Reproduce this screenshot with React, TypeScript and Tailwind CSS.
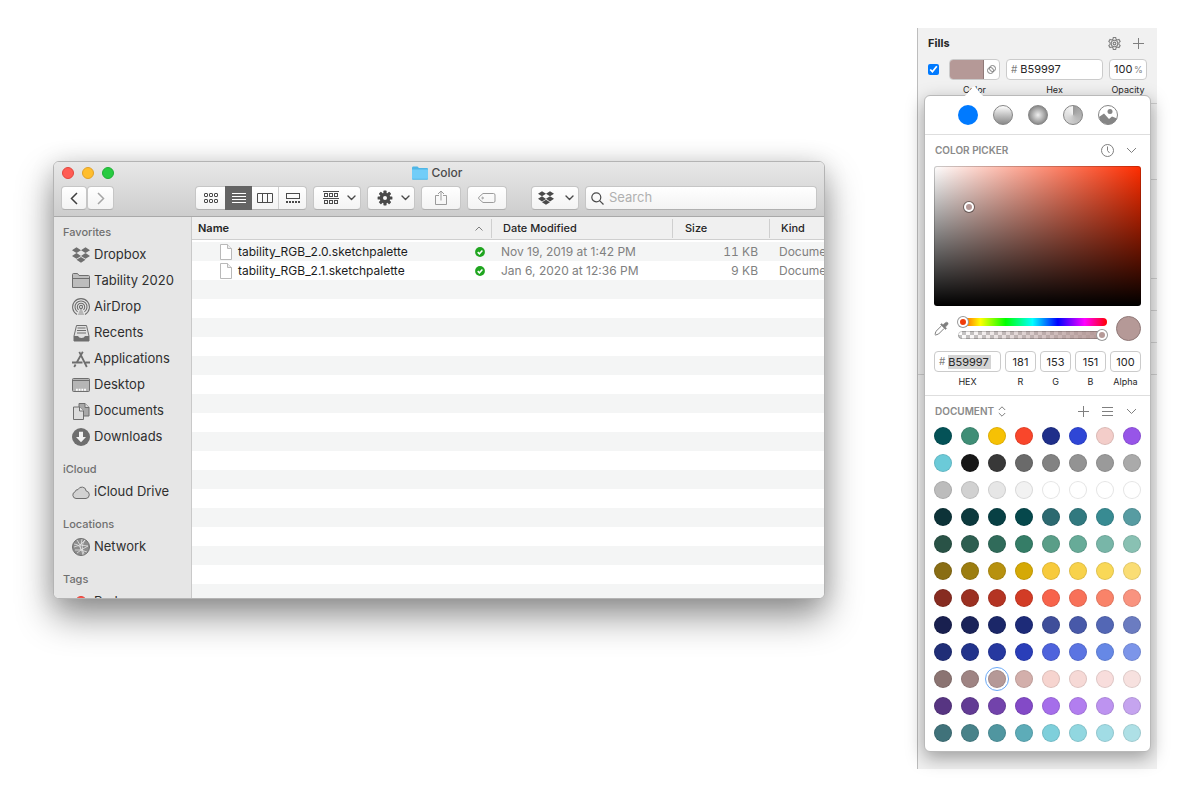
import React from 'react';
import { FaDropbox } from 'react-icons/fa';

type IconProps = { className?: string };

const GridIcon: React.FC = () => (
  <svg width="14" height="12" viewBox="0 0 14 12" fill="none" stroke="#4a4a4a">
    {[0.5, 5.5, 10.5].map((x) => (
      <g key={x}>
        <rect x={x} y="1.5" width="3" height="3" rx="0.5" />
        <rect x={x} y="7.5" width="3" height="3" rx="0.5" />
      </g>
    ))}
  </svg>
);

const ListIcon: React.FC = () => (
  <svg width="14" height="12" viewBox="0 0 14 12" stroke="#fff">
    <path d="M0 1.5h14M0 4.5h14M0 7.5h14M0 10.5h14" />
  </svg>
);

const ColumnsIcon: React.FC = () => (
  <svg width="16" height="12" viewBox="0 0 16 12" fill="none" stroke="#4a4a4a">
    <path d="M.5 1.5h15v9H.5zM5.5 1.5v9M10.5 1.5v9" />
  </svg>
);

const GalleryIcon: React.FC = () => (
  <svg width="14" height="12" viewBox="0 0 14 12" fill="none" stroke="#4a4a4a">
    <rect x=".5" y="1.5" width="13" height="5" />
    <path d="M0 10h14" strokeWidth="2" strokeDasharray="2 1" />
  </svg>
);

const GroupIcon: React.FC = () => (
  <svg width="16" height="14" viewBox="0 0 16 14" fill="none" stroke="#4a4a4a">
    <path d="M0 .5h16M0 7.5h16" />
    {[1.5, 6.5, 11.5].map((x) => (
      <g key={x}>
        <rect x={x} y="2.5" width="3" height="3" />
        <rect x={x} y="9.5" width="3" height="3" />
      </g>
    ))}
  </svg>
);

const CogIcon: React.FC = () => (
  <svg width="16" height="16" viewBox="-8 -8 16 16">
    {[0, 45, 90, 135].map((a) => (
      <rect key={a} x="-1.6" y="-7.4" width="3.2" height="14.8" rx=".6" fill="#4a4a4a" transform={`rotate(${a})`} />
    ))}
    <circle r="5.3" fill="#4a4a4a" />
    <circle r="2" fill="#fafafa" />
  </svg>
);

const ShareIcon: React.FC = () => (
  <svg width="12" height="16" viewBox="0 0 12 16" fill="none" stroke="#9b9b9b">
    <path d="M4 5.500H.5v9h11v-9H8M6 10.500V1M3 4l3-3 3 3" />
  </svg>
);

const TagIcon: React.FC = () => (
  <svg width="18" height="12" viewBox="0 0 18 12" fill="none" stroke="#9b9b9b">
    <path d="M5 1.500h10.500a1.500 1.500 0 0 1 1.500 1.500v6a1.500 1.500 0 0 1-1.500 1.500H5L1.200 7.200a1.600 1.600 0 0 1 0-2.400z" />
    <circle cx="4.600" cy="6" r=".8" />
  </svg>
);

const ChevronDown: React.FC<IconProps> = ({ className }) => (
  <svg className={className} width="9" height="6" viewBox="0 0 9 6" fill="none" stroke="currentColor" strokeWidth="1.4">
    <path d="M1 1l3.500 3.500L8 1" strokeLinecap="round" strokeLinejoin="round" />
  </svg>
);

const WideChevron: React.FC = () => (
  <svg width="11" height="7" viewBox="0 0 11 7" fill="none" stroke="#7f7f7f">
    <path d="M1 1l4.500 4.500L10 1" />
  </svg>
);

const PageIcon: React.FC = () => (
  <svg width="12" height="16" viewBox="0 0 12 16" fill="#fff" stroke="#b9b9b9">
    <path d="M.5.5h7L11.500 4.500v11H.5z" />
    <path d="M7.500.5v4h4" fill="#eee" />
  </svg>
);

const SyncedIcon: React.FC = () => (
  <svg width="10" height="10" viewBox="0 0 10 10">
    <circle cx="5" cy="5" r="4.900" fill="#1fa51f" />
    <path d="M2.700 5.100l1.700 1.700 3-3.300" fill="none" stroke="#fff" strokeWidth="1.500" />
  </svg>
);

const FolderIcon: React.FC = () => (
  <svg width="18" height="16" viewBox="0 0 18 16" fill="#bdbdbd" stroke="#6e6e6e">
    <path d="M.5 14.500v-13q0-1 1-1h4l1.500 2h9.500q1 0 1 1v11z" />
    <path d="M.5 5.500h17" />
  </svg>
);

const AirDropIcon: React.FC = () => (
  <svg width="18" height="18" viewBox="0 0 18 18" fill="none" stroke="#6e6e6e" strokeWidth="1.100">
    <path d="M5 16.400a8.400 8.400 0 1 1 8 0" />
    <path d="M5.600 13.900a6 6 0 1 1 6.800 0" />
    <path d="M6.600 11.800a3.700 3.700 0 1 1 4.800 0" />
    <circle cx="9" cy="9" r="1.600" />
    <path d="M9 9l3.200 8H5.800z" fill="#6e6e6e" stroke="none" opacity=".4" />
  </svg>
);

const RecentsIcon: React.FC = () => (
  <svg width="17" height="17" viewBox="0 0 17 17">
    <path d="M3.500.5h10l2.500 10.500v5H1V11z" fill="#e0e0e0" stroke="#6e6e6e" />
    <path d="M1 11h4q.8 2 3.500 2T12 11h4v5H1z" fill="#6e6e6e" />
    <path d="M4.500 3h8M4 5.500h9M4 8h9" stroke="#6e6e6e" strokeWidth="1.200" />
  </svg>
);

const AppsIcon: React.FC = () => (
  <svg width="18" height="17" viewBox="0 0 18 17" fill="none" stroke="#6e6e6e" strokeWidth="1.800">
    <path d="M7.300.8L14.800 16M10.800.8L4.700 11.500M0 11.500h10.500M13.500 11.500H18M3.600 13.500L2.200 16" />
  </svg>
);

const DesktopIcon: React.FC = () => (
  <svg width="18" height="14" viewBox="0 0 18 14">
    <rect x=".5" y=".5" width="17" height="13" rx="1" fill="#b5b5b5" stroke="#6e6e6e" />
    <path d="M1 2.500h16" stroke="#6e6e6e" />
    <path d="M4 11.800h10" stroke="#fff" strokeWidth="2" strokeDasharray="1.800 .9" />
  </svg>
);

const DocumentsIcon: React.FC = () => (
  <svg width="17" height="17" viewBox="0 0 17 17" stroke="#6e6e6e">
    <path d="M6 .5h6l4 4v8.500H6z" fill="#a8a8a8" />
    <path d="M12 .5v4h4" fill="#ddd" />
    <path d="M.5 4h6l4 4v8.500H.5z" fill="#dcdcdc" />
    <path d="M6.500 4v4h4" fill="#eee" />
  </svg>
);

const DownloadsIcon: React.FC = () => (
  <svg width="18" height="18" viewBox="0 0 18 18">
    <circle cx="9" cy="9" r="9" fill="#6e6e6e" />
    <path d="M7 3.800h4V9h3l-5 5.300L4 9h3z" fill="#f2f2f2" />
  </svg>
);

const CloudIcon: React.FC = () => (
  <svg width="18" height="13" viewBox="0 0 18 13">
    <path
      d="M4 12.500a3.500 3.500 0 0 1-.8-6.800A2.600 2.600 0 0 1 6 3.600 4.300 4.300 0 0 1 14.200 5 3.800 3.800 0 0 1 14 12.500z"
      fill="#d2d2d2"
      stroke="#6e6e6e"
    />
  </svg>
);

const NetworkIcon: React.FC = () => (
  <svg width="18" height="18" viewBox="0 0 18 18">
    <circle cx="9" cy="9" r="8.500" fill="#8d8d8d" stroke="#6e6e6e" />
    <path
      d="M5 2l3 5-6 2M8 7l5-5M8 7l1 5-4 3M9 12l6 2M8 7l8 1M16 8l-7 4M3 12l6 0M10 1l-1 6M13 2q-5 6-1 14M2 6q7 0 9 11"
      fill="none"
      stroke="#e4e4e4"
      strokeWidth=".8"
    />
  </svg>
);

const RedTagIcon: React.FC = () => <span className="size-3 rounded-full border border-[#e2453c] bg-[#ff534a]" />;

const sidebarGroups = [
  {
    title: 'Favorites',
    items: [
      { label: 'Dropbox', icon: <FaDropbox size={18} color="#6e6e6e" /> },
      { label: 'Tability 2020', icon: <FolderIcon /> },
      { label: 'AirDrop', icon: <AirDropIcon /> },
      { label: 'Recents', icon: <RecentsIcon /> },
      { label: 'Applications', icon: <AppsIcon /> },
      { label: 'Desktop', icon: <DesktopIcon /> },
      { label: 'Documents', icon: <DocumentsIcon /> },
      { label: 'Downloads', icon: <DownloadsIcon /> },
    ],
  },
  { title: 'iCloud', items: [{ label: 'iCloud Drive', icon: <CloudIcon /> }] },
  { title: 'Locations', items: [{ label: 'Network', icon: <NetworkIcon /> }] },
  { title: 'Tags', items: [{ label: 'Red', icon: <RedTagIcon /> }] },
];

const files = [
  { name: 'tability_RGB_2.0.sketchpalette', date: 'Nov 19, 2019 at 1:42 PM', size: '11 KB', kind: 'Document' },
  { name: 'tability_RGB_2.1.sketchpalette', date: 'Jan 6, 2020 at 12:36 PM', size: '9 KB', kind: 'Document' },
];

const toolButton =
  'flex h-6 items-center rounded border border-[#c6c6c6] border-b-[#b0b0b0] bg-linear-to-b from-white to-[#f3f3f3] text-[#4a4a4a]';

const Finder: React.FC = () => (
  <section className="mt-[133px] flex h-[438px] min-w-0 flex-1 flex-col overflow-hidden rounded-md border border-[#b4b4b4] bg-white shadow-[0_18px_36px_rgba(0,0,0,0.42),0_2px_24px_rgba(0,0,0,0.12)]">
    {/* Title bar and toolbar */}
    <header className="h-[55px] shrink-0 border-b border-[#a9a9a9] bg-linear-to-b from-[#e8e8e8] to-[#cdcdcd] px-[7px]">
      <div className="mb-0.5 grid h-[22px] grid-cols-[1fr_auto_1fr] items-center">
        <div className="flex gap-2 pl-px">
          <button aria-label="Close" className="size-3 rounded-full border border-[#e2453c] bg-[#ff5c54]" />
          <button aria-label="Minimize" className="size-3 rounded-full border border-[#e0a028] bg-[#ffbe2e]" />
          <button aria-label="Zoom" className="size-3 rounded-full border border-[#1fae35] bg-[#28cb41]" />
        </div>
        <h1 className="flex items-center gap-1 pr-1 text-[12px] font-medium text-[#4a4a4a]">
          <svg width="16" height="14" viewBox="0 0 16 14">
            <path d="M0 2Q0 .5 1 .5h4.500L7 2h8q1 0 1 1v10q0 .8-1 .8H1q-1 0-1-.8z" fill="#4fb6e6" />
            <path d="M0 3.500h16v9.300H0z" fill="#72cdf8" />
          </svg>
          Color
        </h1>
      </div>
      <div className="flex">
        <div className="mr-[81px] flex">
          <button aria-label="Back" className={`${toolButton} w-[26px] justify-center`}>
            <svg width="8" height="13" viewBox="0 0 8 13" fill="none" stroke="#3f3f3f" strokeWidth="1.500">
              <path d="M7 1L1.500 6.500 7 12" />
            </svg>
          </button>
          <button aria-label="Forward" className={`${toolButton} w-[27px] justify-center`}>
            <svg width="8" height="13" viewBox="0 0 8 13" fill="none" stroke="#a5a5a5" strokeWidth="1.500">
              <path d="M1 1l5.500 5.500L1 12" />
            </svg>
          </button>
        </div>
        <div className="flex gap-1.5">
          <div className={`${toolButton} w-28`}>
            <button aria-label="Icons" className="flex w-[29px] justify-center"><GridIcon /></button>
            <button aria-label="List" className="-my-px flex h-6 w-[27px] items-center justify-center bg-[#646464]"><ListIcon /></button>
            <button aria-label="Columns" className="flex h-full w-[27px] items-center justify-center border-r border-[#cfcfcf]"><ColumnsIcon /></button>
            <button aria-label="Gallery" className="flex flex-1 justify-center"><GalleryIcon /></button>
          </div>
          <button aria-label="Group" className={`${toolButton} w-12 justify-between pr-1 pl-[9px]`}>
            <GroupIcon />
            <ChevronDown />
          </button>
          <button aria-label="Action" className={`${toolButton} w-12 justify-between pr-1 pl-[9px]`}>
            <CogIcon />
            <ChevronDown />
          </button>
          <button aria-label="Share" className={`${toolButton} w-10 justify-center`}><ShareIcon /></button>
          <button aria-label="Edit tags" className={`${toolButton} w-10 justify-center`}><TagIcon /></button>
        </div>
        <button aria-label="Dropbox" className={`${toolButton} ml-6 w-12 justify-between pr-1 pl-1.5`}>
          <FaDropbox size={16} />
          <ChevronDown />
        </button>
        <label className={`${toolButton} ml-1.5 min-w-0 flex-1 gap-[5px] px-[5px]`}>
          <svg width="13" height="13" viewBox="0 0 13 13" fill="none" stroke="#4a4a4a" strokeWidth="1.200">
            <circle cx="5.300" cy="5.300" r="4.500" />
            <path d="M8.600 8.600l3.900 3.900" />
          </svg>
          <input type="search" aria-label="Search" placeholder="Search" className="min-w-0 flex-1 text-[13px] outline-none placeholder:text-[#b0b0b0]" />
        </label>
      </div>
    </header>

    <div className="flex min-h-0 flex-1">
      {/* Sidebar */}
      <nav className="flex w-[138px] shrink-0 flex-col gap-2.5 overflow-hidden border-r border-[#c9c9c9] bg-[#e6e6e6] pt-1.5">
        {sidebarGroups.map((group) => (
          <div key={group.title}>
            <h2 className="pl-[9px] text-[11px] leading-[19px] font-medium text-[#707070]">{group.title}</h2>
            <ul>
              {group.items.map((item) => (
                <li key={item.label}>
                  <a href="#" className="flex h-[26px] items-center gap-1 pl-[18px] text-[13px] whitespace-nowrap text-[#2f2f2f]">
                    <span className="flex w-[18px] justify-center">{item.icon}</span>
                    {item.label}
                  </a>
                </li>
              ))}
            </ul>
          </div>
        ))}
      </nav>

      {/* File list, striped down to the bottom of the window */}
      <div className="min-w-0 flex-1 overflow-hidden bg-[repeating-linear-gradient(#f4f5f5_0_19px,#fff_19px_38px)] bg-[position:0_25px] bg-no-repeat">
        <table className="w-full table-fixed border-separate border-spacing-0 text-left text-[12px] whitespace-nowrap">
          <thead className="text-[11px] text-[#262626]">
            <tr className="[&>th]:h-[23px] [&>th]:border-b [&>th]:border-[#cfcfcf] [&>th]:bg-[#f0f0f0] [&>th]:p-0">
              <th className="font-semibold">
                <div className="flex h-[19px] items-center justify-between border-r border-[#cfcfcf] pr-2 pl-1.5">
                  Name
                  <svg width="8" height="5" viewBox="0 0 8 5" fill="none" stroke="#7f7f7f">
                    <path d="M.5 4.500L4 1l3.500 3.500" />
                  </svg>
                </div>
              </th>
              <th className="w-[181px] font-medium">
                <div className="flex h-[19px] items-center border-r border-[#cfcfcf] pl-[11px]">Date Modified</div>
              </th>
              <th className="w-[97px] font-medium">
                <div className="flex h-[19px] items-center border-r border-[#cfcfcf] pl-3">Size</div>
              </th>
              <th className="w-[54px] font-medium">
                <div className="pl-[11px]">Kind</div>
              </th>
            </tr>
          </thead>
          <tbody className="before:block before:h-0.5 before:bg-white">
            {files.map((file) => (
              <tr key={file.name} className="[&>td]:h-[19px] [&>td]:py-0 [&>td]:leading-[19px]">
                <td className="pr-[7px] pl-7">
                  <div className="flex items-center gap-1.5 text-[#1c1c1c]">
                    <PageIcon />
                    <span className="flex-1">{file.name}</span>
                    <SyncedIcon />
                  </div>
                </td>
                <td className="pr-0 pl-[9px] text-[#808080]">{file.date}</td>
                <td className="pr-3 pl-0 text-right text-[#808080] tabular-nums">{file.size}</td>
                <td className="overflow-hidden pr-0 pl-[9px] text-[#808080]">{file.kind}</td>
              </tr>
            ))}
          </tbody>
        </table>
      </div>
    </div>
  </section>
);

const palette = [
  ['#045257', '#3f8e76', '#f6c104', '#f9462b', '#1f2f8a', '#2f46d6', '#f3cdc9', '#9755e8'],
  ['#6bcad8', '#171717', '#383838', '#6a6a6a', '#828282', '#939393', '#9a9a9a', '#aaaaaa'],
  ['#bcbcbc', '#d1d1d1', '#e6e6e6', '#f2f2f2', '#ffffff', '#ffffff', '#ffffff', '#ffffff'],
  ['#0d3338', '#0c393d', '#084044', '#06484c', '#2c6970', '#31797f', '#388b92', '#579ca2'],
  ['#295246', '#2d5e50', '#306b5a', '#357d67', '#5a9e88', '#67ab98', '#78b6a8', '#89c1b3'],
  ['#896d14', '#9c7d10', '#b7910f', '#d5a906', '#f7ca3c', '#f8d24a', '#f9d857', '#fadd74'],
  ['#872c21', '#9b3021', '#b43423', '#d23c26', '#f7634b', '#f87159', '#f98369', '#f9937f'],
  ['#19204f', '#1a2359', '#1b2768', '#1d2b78', '#3f4e9a', '#4859a9', '#5367b5', '#6b7cc1'],
  ['#202e77', '#22338b', '#26389f', '#2a3eb9', '#4e63dc', '#5b74e2', '#6688e6', '#7c95e9'],
  ['#8b7472', '#9f8483', '#b59997', '#d3afab', '#f6d4cf', '#f6d9d6', '#f8dddc', '#f7e1df'],
  ['#573582', '#623b94', '#7243ab', '#834ac7', '#a56eea', '#b27eef', '#bd93f0', '#c5a4ef'],
  ['#40727a', '#488289', '#5096a0', '#5dacb8', '#7ecfdb', '#91d7e0', '#a1dce5', '#aee0e6'],
];

const channels = [
  { label: 'R', value: '181' },
  { label: 'G', value: '153' },
  { label: 'B', value: '151' },
  { label: 'Alpha', value: '100' },
];

const field = 'flex h-[21px] w-full items-center rounded border border-[#cbcbcb] bg-white text-[11px] text-[#262626]';
const fieldLabel = 'text-[9px] leading-3 text-[#262626]';
const thumb =
  'block appearance-none rounded-full [&::-webkit-slider-thumb]:size-2.5 [&::-webkit-slider-thumb]:appearance-none [&::-webkit-slider-thumb]:rounded-full [&::-webkit-slider-thumb]:border-2 [&::-webkit-slider-thumb]:border-white [&::-webkit-slider-thumb]:shadow-[0_0_0_1px_#9a9a9a]';

const ColorPopover: React.FC = () => (
  <div className="absolute inset-x-1.5 top-[67px] rounded-md border border-[#b9b9b9] bg-white shadow-[0_6px_18px_rgba(0,0,0,0.35)]">
    <svg className="absolute -top-2.5 left-[37px]" width="24" height="11" viewBox="0 0 24 11">
      <path d="M0 11Q2.500 10.500 4.500 8.500L10.500 1.200Q12 0 13.500 1.200L19.500 8.500Q21.500 10.500 24 11z" fill="#fff" />
    </svg>

    {/* Fill types */}
    <div className="flex h-[39px] items-center justify-center gap-[15px] border-b border-[#dedede]">
      <button aria-label="Solid" className="size-5 rounded-full bg-[#007aff]" />
      <button aria-label="Linear gradient" className="size-5 rounded-full border border-[#858585] bg-linear-to-b from-white to-[#8a8a8a]" />
      <button aria-label="Radial gradient" className="size-5 rounded-full border border-[#858585] bg-[radial-gradient(circle,#efefef,#858585_75%)]" />
      <button aria-label="Angular gradient" className="size-5 rounded-full border border-[#858585] bg-[conic-gradient(#9a9a9a,#f5f5f5)]" />
      <button aria-label="Image" className="size-5">
        <svg width="20" height="20" viewBox="0 0 20 20">
          <circle cx="10" cy="10" r="9.500" fill="#fff" stroke="#858585" />
          <circle cx="12" cy="6.500" r="2.500" fill="#858585" />
          <path d="M1 12l5-3.500 5 5.500 3-2.500 5 2A9.500 9.500 0 0 1 1 12z" fill="#858585" />
        </svg>
      </button>
    </div>

    {/* Color picker */}
    <div className="border-b border-[#dedede] px-[9px] pb-[7px]">
      <div className="flex h-[31px] items-center gap-3 pr-1">
        <h2 className="flex-1 pl-px text-[10px] font-semibold text-[#8a8a8a]">COLOR PICKER</h2>
        <button aria-label="Recent colors">
          <svg width="13" height="13" viewBox="0 0 13 13" fill="none" stroke="#7f7f7f">
            <circle cx="6.500" cy="6.500" r="6" />
            <path d="M6.500 2.500v4l2 2.500" />
          </svg>
        </button>
        <button aria-label="Collapse picker"><WideChevron /></button>
      </div>
      <div className="relative h-[140px] rounded-[3px] border border-black/20 bg-[linear-gradient(to_top,#000,transparent),linear-gradient(to_right,#fff,#ff2d00)] bg-origin-border">
        <span className="absolute top-[35px] left-[29px] size-[10px] rounded-full border-2 border-white bg-[#b59997] shadow-[0_0_0_1px_rgba(0,0,0,0.4)]" />
      </div>
      <div className="flex h-[45px] items-center gap-[9px]">
        <button aria-label="Pick color" className="w-[15px]">
          <svg width="15" height="15" viewBox="0 0 15 15" fill="none" stroke="#7f7f7f">
            <path d="M7.500 4.800l-5.600 5.600-.9 3.100.6.500 3-1 5.600-5.600" />
            <path d="M6.500 3.500l5 5 1.100-1.100-1.200-1.300L13.500 4q1.200-1.300.2-2.400-1.200-1-2.500.2L9 3.800 7.700 2.500z" fill="#7f7f7f" strokeWidth=".5" />
          </svg>
        </button>
        <div className="flex flex-1 flex-col gap-[5px]">
          <input
            type="range"
            aria-label="Hue"
            min={0}
            max={360}
            defaultValue={0}
            className={`${thumb} h-2 w-full bg-[linear-gradient(to_right,#f20,#ff0_15%,#0f0_32%,#0ff_50%,#00f_67%,#f0f_85%,#f00)] [&::-webkit-slider-thumb]:bg-[#f03c0a]`}
          />
          <input
            type="range"
            aria-label="Transparency"
            min={0}
            max={100}
            defaultValue={100}
            className={`${thumb} h-2 w-full bg-[linear-gradient(to_right,transparent,#b59997),repeating-conic-gradient(#c4c4c4_0_25%,#fff_0_50%)] bg-[size:100%_100%,8px_8px] shadow-[inset_0_0_0_1px_rgba(0,0,0,0.2)] [&::-webkit-slider-thumb]:bg-[#b59997]`}
          />
        </div>
        <span className="size-[25px] rounded-full border border-[#907978] bg-[#b59997]" />
      </div>
      <div className="flex gap-1">
        <label className="flex flex-1 flex-col items-center gap-1">
          <span className={`${field} gap-[3px] px-1`}>
            <span className="text-[10px] text-[#7f7f7f]">#</span>
            <input defaultValue="B59997" className="w-[43px] bg-[#d4d4d4] leading-[14px] outline-none" />
          </span>
          <span className={fieldLabel}>HEX</span>
        </label>
        {channels.map((channel) => (
          <label key={channel.label} className="flex w-[31px] flex-col items-center gap-1">
            <input defaultValue={channel.value} className={`${field} text-center outline-none`} />
            <span className={fieldLabel}>{channel.label}</span>
          </label>
        ))}
      </div>
    </div>

    {/* Document colors */}
    <div className="px-[9px] pb-[9px]">
      <div className="flex h-[31px] items-center gap-3 pr-1">
        <h2 className="flex flex-1 items-center gap-1 pl-px text-[10px] font-semibold text-[#8a8a8a]">
          DOCUMENT
          <svg width="8" height="11" viewBox="0 0 8 11" fill="none" stroke="#7f7f7f">
            <path d="M.8 4L4 .8 7.200 4M.8 7L4 10.200 7.200 7" />
          </svg>
        </h2>
        <button aria-label="Add color">
          <svg width="12" height="11" viewBox="0 0 12 11" stroke="#7f7f7f">
            <path d="M6.500 0v11M1 5.500h11" />
          </svg>
        </button>
        <button aria-label="Show as list">
          <svg width="13" height="11" viewBox="0 0 13 11" stroke="#7f7f7f">
            <path d="M1 1.500h11M1 5.500h11M1 9.500h11" />
          </svg>
        </button>
        <button aria-label="Collapse document colors"><WideChevron /></button>
      </div>
      <div className="grid grid-cols-[repeat(8,18px)] justify-between gap-y-[9px]">
        {palette.flat().map((color, i) => (
          <button
            key={i}
            aria-label={color}
            className={`size-[18px] rounded-full border border-black/10 bg-origin-border ${
              color === '#b59997' ? 'outline outline-offset-2 outline-[#6aa9f7]' : ''
            }`}
            style={{ backgroundColor: color }}
          />
        ))}
      </div>
    </div>
  </div>
);

const Inspector: React.FC = () => (
  <aside className="relative min-h-[741px] w-60 shrink-0 border-l border-[#bdbdbd] bg-[#f1f1f1]">
    <div className="ml-2.5 h-[76px] border-b border-[#cfcfcf]">
      <div className="flex h-[31px] items-center justify-between pr-[13px]">
        <h2 className="text-[11px] font-bold text-[#262626]">Fills</h2>
        <div className="flex items-center gap-3">
          <button aria-label="Fill options">
            <svg width="13" height="13" viewBox="0 0 24 24" fill="none" stroke="#7f7f7f" strokeWidth="2">
              <path d="M9.800 1h4.400l.7 3.200 2.300 1.300 3.100-1 2.200 3.800-2.400 2.200v3l2.400 2.200-2.200 3.800-3.100-1-2.300 1.300-.7 3.200H9.800l-.7-3.200-2.300-1.300-3.100 1-2.200-3.800 2.400-2.200v-3L1.500 8.300l2.200-3.800 3.100 1 2.300-1.300z" />
              <circle cx="12" cy="12" r="6" />
              <circle cx="12" cy="12" r="2.500" />
            </svg>
          </button>
          <button aria-label="Add fill">
            <svg width="11" height="11" viewBox="0 0 11 11" stroke="#7f7f7f">
              <path d="M5.500 0v11M0 5.500h11" />
            </svg>
          </button>
        </div>
      </div>
      <div className="flex gap-1.5 pr-2.5">
        <input type="checkbox" aria-label="Fill enabled" defaultChecked className="mt-[5px] mr-1 size-[11px] accent-[#007aff]" />
        <div className="flex w-[51px] flex-col items-center gap-1">
          <div className={`${field} overflow-hidden`}>
            <button aria-label="Color" className="h-full w-[34px] border-r border-[#907978] bg-[#b59997]" />
            <button aria-label="Blending" className="flex flex-1 justify-center">
              <svg width="9" height="9" viewBox="0 0 9 9" fill="none" stroke="#7f7f7f">
                <circle cx="5.500" cy="3.500" r="3" />
                <circle cx="3.500" cy="5.500" r="3" />
              </svg>
            </button>
          </div>
          <span className={fieldLabel}>Color</span>
        </div>
        <label className="flex min-w-0 flex-1 flex-col items-center gap-1">
          <span className={`${field} gap-[3px] px-1`}>
            <span className="text-[10px] text-[#7f7f7f]">#</span>
            <input defaultValue="B59997" className="min-w-0 flex-1 outline-none" />
          </span>
          <span className={fieldLabel}>Hex</span>
        </label>
        <label className="flex w-[38px] flex-col items-center gap-1">
          <span className={`${field} pl-1`}>
            <input defaultValue="100" className="w-5 outline-none" />
            <span className="text-[9px] text-[#7f7f7f]">%</span>
          </span>
          <span className={fieldLabel}>Opacity</span>
        </label>
      </div>
    </div>
    {/* Sections behind the popover */}
    <div className="ml-2.5 h-[76px] border-b border-[#cfcfcf]" />
    <div className="ml-2.5 h-[99px] border-b border-[#cfcfcf]" />
    <div className="ml-2.5 h-8 border-b border-[#cfcfcf]" />
    <div className="ml-2.5 h-8 border-b border-[#cfcfcf]" />
    <div className="h-8 border-b border-[#cfcfcf]" />
    <ColorPopover />
  </aside>
);

const App: React.FC = () => {
  return (
    <main className="flex min-h-screen items-start gap-[92px] bg-white py-7 pr-9 pl-[53px] font-[Inter,sans-serif]">
      <Finder />
      <Inspector />
    </main>
  );
};

export default App;
